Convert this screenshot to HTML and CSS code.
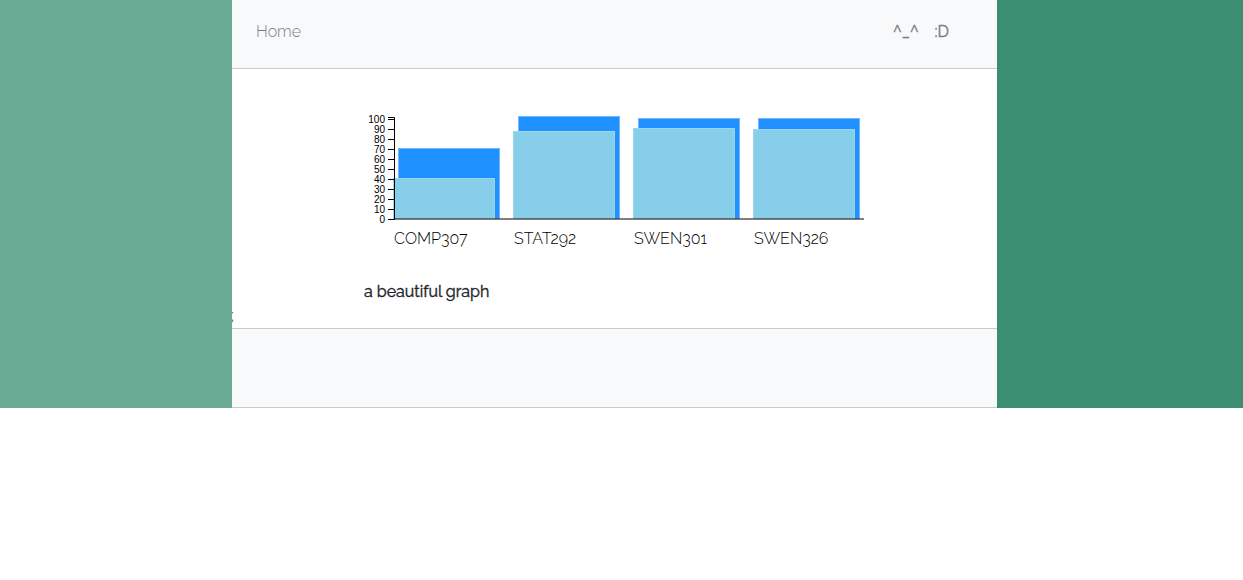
FILE: index.html
```html
<!DOCTYPE html>
<html lang="en">
<head>
<meta charset="utf-8">
<title>Home</title>
<link rel="stylesheet" href="styles.css">
</head>
<body>
<div class="layout">
  <div class="side side-left"></div>
  <div class="page">
    <header class="navbar">
      <a class="nav-link" href="#">Home</a>
      <nav class="nav-right">
        <a class="nav-link nav-face" href="#">^_^</a>
        <a class="nav-link nav-face" href="#">:D</a>
      </nav>
    </header>
    <main class="content">
      <figure class="graph">
        <svg class="chart" width="500" height="200" viewBox="0 0 500 200" role="img" aria-label="Course results bar chart">
          <g class="bar-back">
            <rect x="34.5" y="79.5" width="101" height="70"/>
            <rect x="154.5" y="47.5" width="101" height="102"/>
            <rect x="274.5" y="49.5" width="101" height="100"/>
            <rect x="394.5" y="49.5" width="101" height="100"/>
          </g>
          <g class="bar-front">
            <rect x="29.5" y="109.5" width="101" height="40"/>
            <rect x="149.5" y="62.5" width="101" height="87"/>
            <rect x="269.5" y="59.5" width="101" height="90"/>
            <rect x="389.5" y="60.5" width="101" height="89"/>
          </g>
          <path class="baseline" d="M30 150H500"/>
          <path class="axis" d="M24 48.5H30.5V150.5H24M24 140.5h6M24 130.5h6M24 120.5h6M24 110.5h6M24 100.5h6M24 90.5h6M24 80.5h6M24 70.5h6M24 60.5h6M24 50.5h6"/>
          <g class="ticks">
            <text x="21" y="54">100</text>
            <text x="21" y="64">90</text>
            <text x="21" y="74">80</text>
            <text x="21" y="84">70</text>
            <text x="21" y="94">60</text>
            <text x="21" y="104">50</text>
            <text x="21" y="114">40</text>
            <text x="21" y="124">30</text>
            <text x="21" y="134">20</text>
            <text x="21" y="144">10</text>
            <text x="21" y="154">0</text>
          </g>
          <g class="labels">
            <text x="30" y="175">COMP307</text>
            <text x="150" y="175">STAT292</text>
            <text x="270" y="175">SWEN301</text>
            <text x="390" y="175">SWEN326</text>
          </g>
        </svg>
        <figcaption class="caption">a beautiful graph</figcaption>
      </figure>
      <span class="stray">;</span>
    </main>
    <footer class="footer"></footer>
  </div>
  <div class="side side-right"></div>
</div>
</body>
</html>
```
FILE: styles.css
```css
* {
  box-sizing: border-box;
}

body {
  margin: 0;
  background: #fff;
  color: #212529;
  font: 16px/24px Raleway, Lato, "Open Sans", sans-serif;
}

.layout {
  display: grid;
  grid-template-columns: 232fr 765fr 246fr;
}

.side-left {
  background: #6aab95;
}

.side-right {
  background: #3c8e72;
}

.page {
  overflow: hidden;
}

.navbar {
  display: flex;
  justify-content: space-between;
  padding: 20px 48px 24px 24px;
  background: #f8f9fb;
  border-bottom: 1px solid #c8cacc;
}

.nav-link {
  color: #7c7d7e;
  text-decoration: none;
  font-weight: 300;
}

.nav-right {
  display: flex;
  gap: 16px;
}

.nav-face {
  font-weight: 400;
  -webkit-text-stroke: 0.4px;
}

.graph {
  width: 501px;
  margin: 0 auto;
}

.chart {
  display: block;
}

.bar-back rect {
  fill: #1e90ff;
  stroke: #76b9f3;
}

.bar-front rect {
  fill: #87ceeb;
  stroke: #9fd5e8;
}

.baseline {
  stroke: #000;
  stroke-opacity: 0.5;
  stroke-width: 2;
}

.axis {
  fill: none;
  stroke: #000;
}

.ticks {
  font: 10px "Liberation Sans", Arial, sans-serif;
  text-anchor: end;
}

.labels {
  font: 300 16px Raleway, Lato, sans-serif;
  fill: #000;
}

.caption {
  padding-top: 11px;
  font-weight: 400;
  -webkit-text-stroke: 0.4px;
}

.stray {
  display: block;
  margin-left: -1px;
  font-weight: 300;
}

.footer {
  height: 80px;
  background: #f8f9fb;
  border-top: 1px solid #c8cacc;
  border-bottom: 1px solid #c8cacc;
}
```
